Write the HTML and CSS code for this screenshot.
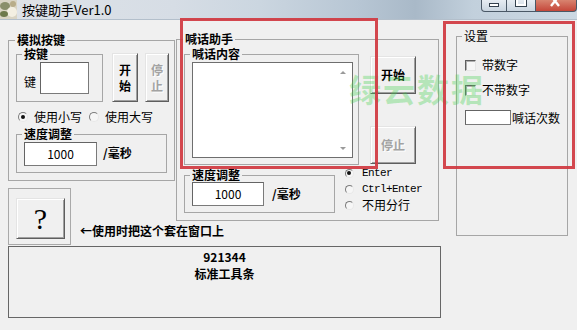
FILE: index.html
```html
<!DOCTYPE html>
<html lang="zh-CN">
<head>
<meta charset="utf-8">
<title>按键助手Ver1.0</title>
<link rel="stylesheet" href="styles.css">
</head>
<body>
<div class="window">
  <div class="titlebar">
    <svg class="app-icon" width="17" height="19" viewBox="0 0 17 19">
      <rect x="0" y="0" width="17" height="19" fill="#d9d4c4"/>
      <ellipse cx="5" cy="6" rx="5" ry="4" fill="#8a8f6a"/>
      <ellipse cx="12" cy="12" rx="5" ry="5" fill="#f3efe2"/>
      <ellipse cx="4" cy="14" rx="4" ry="3" fill="#6e7a4c"/>
      <ellipse cx="13" cy="4" rx="3" ry="3" fill="#b8ad8a"/>
    </svg>
    <span class="title">按键助手Ver1.0</span>
    <div class="caption">
      <span class="cap cap-min"><i class="glyph-min"></i></span>
      <span class="cap cap-max"><i class="glyph-max"></i></span>
      <span class="cap cap-close">
        <svg width="12" height="8" viewBox="0 0 12 8"><path d="M1 -4 L9 6 M9 -4 L1 6" stroke="#fff" stroke-width="2.4" fill="none"/></svg>
      </span>
    </div>
  </div>

  <div class="client">
    <div class="top">
      <div class="left-col">
        <div class="grp grp-sim">
          <div class="grp-title grp-title-sim">模拟按键</div>
          <div class="sim-body">
            <div class="key-row">
              <div class="grp grp-key">
                <div class="grp-title">按键</div>
                <div class="key-body">
                  <span class="lbl-key">键</span>
                  <span class="edit edit-key"></span>
                </div>
              </div>
              <button class="btn btn-vstart">开<br>始</button>
              <button class="btn btn-vstop" disabled>停<br>止</button>
            </div>
            <div class="radio-row">
              <span class="radio checked"></span><span class="rtext">使用小写</span>
              <span class="radio r2"></span><span class="rtext">使用大写</span>
            </div>
            <div class="grp grp-speed">
              <div class="grp-title">速度调整</div>
              <div class="speed-body">
                <span class="edit edit-speed">1000</span>
                <span class="unit">/毫秒</span>
              </div>
            </div>
          </div>
        </div>
        <div class="help-row">
          <div class="help-panel"><button class="btn btn-help">?</button></div>
          <span class="hint">←使用时把这个套在窗口上</span>
        </div>
      </div>

      <div class="grp grp-shout">
        <div class="grp-title grp-title-shout">喊话助手</div>
        <div class="shout-body">
          <div class="shout-top">
            <div class="grp grp-content">
              <div class="grp-title">喊话内容</div>
              <div class="content-body">
                <div class="textbox">
                  <div class="sb"><i class="arr-up"></i><i class="arr-down"></i></div>
                </div>
              </div>
            </div>
            <div class="btn-col">
              <button class="btn btn-start">开始</button>
              <button class="btn btn-stop" disabled>停止</button>
            </div>
          </div>
          <div class="shout-bottom">
            <div class="grp grp-speed2">
              <div class="grp-title">速度调整</div>
              <div class="speed2-body">
                <span class="edit edit-speed2">1000</span>
                <span class="unit unit2">/毫秒</span>
              </div>
            </div>
            <div class="radio-col">
              <div class="rline"><span class="radio checked"></span><span class="mono">Enter</span></div>
              <div class="rline"><span class="radio"></span><span class="mono">Ctrl+Enter</span></div>
              <div class="rline"><span class="radio"></span><span class="rtext2">不用分行</span></div>
            </div>
          </div>
        </div>
      </div>

      <div class="grp grp-settings">
        <div class="grp-title grp-title-plain">设置</div>
        <div class="settings-body">
          <div class="chk-line first"><span class="chk"></span><span class="ctext">带数字</span></div>
          <div class="chk-line"><span class="chk"></span><span class="ctext">不带数字</span></div>
          <div class="count-line"><span class="edit edit-count"></span><span class="ctext2">喊话次数</span></div>
        </div>
      </div>
    </div>

    <div class="status">
      <div class="st-num">921344</div>
      <div class="st-name">标准工具条</div>
    </div>
  </div>

  <div class="watermark">绿云数据</div>
  <div class="mark mark-1"></div>
  <div class="mark mark-2"></div>
</div>
</body>
</html>
```

FILE: styles.css
```css
* { box-sizing: border-box; }
html, body { margin: 0; padding: 0; }
body {
  width: 577px;
  height: 330px;
  overflow: hidden;
  background: #f0f0f0;
  font-family: "Noto Sans CJK SC", sans-serif;
  font-size: 12px;
  line-height: 16px;
  color: #000;
}
.window { position: relative; width: 577px; height: 330px; }

/* title bar */
.titlebar {
  height: 20px;
  display: flex;
  align-items: flex-start;
  background: linear-gradient(90deg, #dfe3e8 0%, #d6dde5 30%, #cbd6e0 45%, #b7c6d4 62%, #a9b9c8 72%, #c2d0dc 82%, #ccd8e3 100%);
  border-bottom: 1px solid #b3bfcb;
}
.app-icon { display: block; flex: none; }
.title {
  margin-left: 5px;
  font-size: 13px;
  line-height: 19px;
  white-space: nowrap;
}
.caption { margin-left: auto; display: flex; height: 12px; }
.cap {
  height: 12px;
  display: flex;
  justify-content: center;
  align-items: flex-start;
  border: 1px solid #4a5866;
  border-top: 0;
}
.cap-min {
  width: 26px;
  border-bottom-left-radius: 4px;
  background: linear-gradient(#e6ecf2, #c9d5e0);
}
.cap-max {
  width: 29px;
  border-left: 0;
  background: linear-gradient(#e6ecf2, #c9d5e0);
}
.cap-close {
  width: 41px;
  border-left: 0;
  border-bottom-right-radius: 4px;
  background: linear-gradient(#d8836f, #c5473a);
}
.glyph-min {
  display: block;
  margin-top: 3px;
  width: 10px;
  height: 4px;
  background: #fff;
  border: 1px solid #34414e;
}
.glyph-max {
  display: block;
  width: 12px;
  height: 7px;
  border: 1px solid #34414e;
  border-top: 0;
  box-shadow: inset 0 -2px 0 #fff, inset 2px 0 0 #fff, inset -2px 0 0 #fff;
}
.cap-close svg { display: block; }

/* client */
.client { padding-left: 8px; }
.top { display: flex; align-items: flex-start; }
.top > * { flex: none; }

/* group boxes */
.grp { border: 1px solid #a6a6a6; }
.grp-title {
  display: table;
  margin: -8px 0 0 5px;
  padding: 0 2px;
  height: 14px;
  line-height: 14px;
  background: #f0f0f0;
  font-weight: 700;
  white-space: nowrap;
}
.grp-title-sim, .grp-title-shout { margin-left: 6px; }
.grp-title-plain { font-weight: 400; }

/* left column */
.left-col { width: 166px; margin-top: 20px; }
.grp-sim { width: 167px; }
.sim-body { padding: 0 0 7px 7px; }
.key-row { display: flex; align-items: flex-start; }
.key-row > * { flex: none; }
.grp-key { width: 87px; margin-top: 7px; }
.key-body {
  height: 40px;
  display: flex;
  align-items: flex-start;
  padding-left: 7px;
}
.lbl-key { margin-top: 13px; }
.edit {
  display: block;
  flex: none;
  background: #fff;
  border: 1px solid #7a7a7a;
  border-top-color: #646464;
  border-left-color: #646464;
}
.edit-key { width: 49px; height: 32px; margin-top: 1px; margin-left: 4px; }

.btn {
  font-family: inherit;
  font-size: 12px;
  line-height: 16px;
  font-weight: 700;
  color: #000;
  background: #f0f0f0;
  padding: 0;
  margin: 0;
  border: 1px solid;
  border-color: #e4e4e4 #5e5e5e #5e5e5e #e4e4e4;
  box-shadow: inset 1px 1px 0 #fff, inset -1px -1px 0 #a0a0a0;
}
.btn:disabled {
  color: #a2a2a2;
  text-shadow: 1px 1px 0 #fff;
}
.btn-vstart { width: 26px; height: 49px; margin: 6px 0 0 9px; }
.btn-vstop { width: 24px; height: 49px; margin: 6px 0 0 7px; }

.radio-row {
  height: 25px;
  padding-top: 5px;
  display: flex;
  align-items: center;
}
.radio {
  display: block;
  flex: none;
  width: 10px;
  height: 10px;
  border-radius: 50%;
  border: 1px solid;
  border-color: #7c7c7c #e8e8e8 #e8e8e8 #7c7c7c;
  background: #f6f6f6;
  position: relative;
}
.radio.checked::after {
  content: "";
  position: absolute;
  left: 2px;
  top: 2px;
  width: 4px;
  height: 4px;
  border-radius: 50%;
  background: #111;
}
.radio-row .radio { margin-left: 2px; }
.radio-row .radio.r2 { margin-left: 7px; }
.rtext { margin-left: 6px; white-space: nowrap; }

.grp-speed { width: 151px; margin-top: 7px; }
.speed-body {
  height: 31px;
  display: flex;
  align-items: flex-start;
  padding-left: 7px;
}
.edit-speed, .edit-speed2 {
  height: 24px;
  line-height: 22px;
  text-align: center;
}
.edit-speed { width: 73px; margin-top: 1px; }
.unit { margin-left: 6px; margin-top: 4px; font-weight: 700; white-space: nowrap; }

.help-row { display: flex; align-items: flex-start; margin-top: 7px; }
.help-panel {
  width: 63px;
  height: 57px;
  border: 1px solid #a9a9a9;
  padding: 9px 0 0 7px;
  flex: none;
}
.btn-help {
  width: 49px;
  height: 41px;
  font-family: "Liberation Serif", serif;
  font-weight: 400;
  font-size: 30px;
  line-height: 30px;
}
.hint {
  margin: 35px 0 0 9px;
  font-weight: 700;
  white-space: nowrap;
}

/* middle group */
.grp-shout { width: 263px; margin: 19px 0 0 2px; }
.shout-body { padding: 0 0 7px 7px; }
.shout-top { display: flex; align-items: flex-start; }
.shout-top > * { flex: none; }
.grp-content { width: 175px; margin-top: 8px; }
.content-body { padding: 1px 0 6px 7px; }
.textbox {
  width: 161px;
  height: 96px;
  background: #fff;
  border: 1px solid #6e6e6e;
  display: flex;
  justify-content: flex-end;
}
.sb {
  width: 18px;
  display: flex;
  flex-direction: column;
  justify-content: space-between;
  align-items: center;
  padding: 8px 0 7px;
}
.arr-up, .arr-down {
  display: block;
  width: 0;
  height: 0;
  border-left: 3px solid transparent;
  border-right: 3px solid transparent;
}
.arr-up { border-bottom: 3px solid #9a9a9a; }
.arr-down { border-top: 3px solid #9a9a9a; }

.btn-col { display: flex; flex-direction: column; margin: 10px 0 0 11px; }
.btn-start, .btn-stop { width: 46px; height: 38px; }
.btn-stop { margin-top: 32px; }

.shout-bottom { display: flex; align-items: flex-start; }
.shout-bottom > * { flex: none; }
.grp-speed2 { width: 151px; margin-top: 10px; }
.speed2-body {
  height: 30px;
  display: flex;
  align-items: flex-start;
  padding-left: 7px;
}
.edit-speed2 { width: 72px; }
.unit2 { margin-left: 8px; margin-top: 4px; }
.radio-col { margin-left: 10px; }
.rline { height: 16px; display: flex; align-items: center; }
.rline .radio { width: 9px; height: 9px; }
.rline .radio.checked::after { left: 1px; top: 1px; width: 4px; height: 4px; }
.mono {
  margin-left: 8px;
  font-family: "Liberation Mono", monospace;
  font-size: 11px;
  letter-spacing: -0.6px;
  white-space: nowrap;
}
.rtext2 { margin-left: 8px; white-space: nowrap; }

/* settings group */
.grp-settings { width: 112px; margin: 16px 0 0 17px; }
.settings-body { height: 178px; padding-left: 8px; }
.chk-line { height: 16px; display: flex; align-items: center; margin-top: 9px; }
.chk-line.first { margin-top: 14px; }
.chk {
  display: block;
  flex: none;
  width: 11px;
  height: 11px;
  background: #f7f7f7;
  border: 1px solid;
  border-color: #5f5f5f #e6e6e6 #e6e6e6 #5f5f5f;
  box-shadow: inset 1px 1px 0 #b0b0b0;
}
.ctext { margin-left: 6px; white-space: nowrap; }
.count-line { display: flex; align-items: center; margin-top: 12px; height: 15px; }
.edit-count { width: 46px; height: 15px; }
.ctext2 { margin-left: 1px; white-space: nowrap; }

/* status bar panel */
.status {
  width: 433px;
  height: 72px;
  margin-top: 1px;
  border: 1px solid #666;
  padding-top: 1px;
  text-align: center;
  font-weight: 700;
  line-height: 17px;
}

/* overlays */
.watermark {
  position: absolute;
  left: 349px;
  top: 72px;
  font-size: 32px;
  line-height: 32px;
  letter-spacing: 2px;
  font-weight: 700;
  color: rgba(70, 210, 80, 0.34);
  white-space: nowrap;
  pointer-events: none;
}
.mark {
  position: absolute;
  border: 3px solid rgba(208, 56, 64, 0.92);
}
.mark-1 { left: 180px; top: 18px; width: 198px; height: 151px; }
.mark-2 { left: 443px; top: 21px; width: 132px; height: 148px; }
```
